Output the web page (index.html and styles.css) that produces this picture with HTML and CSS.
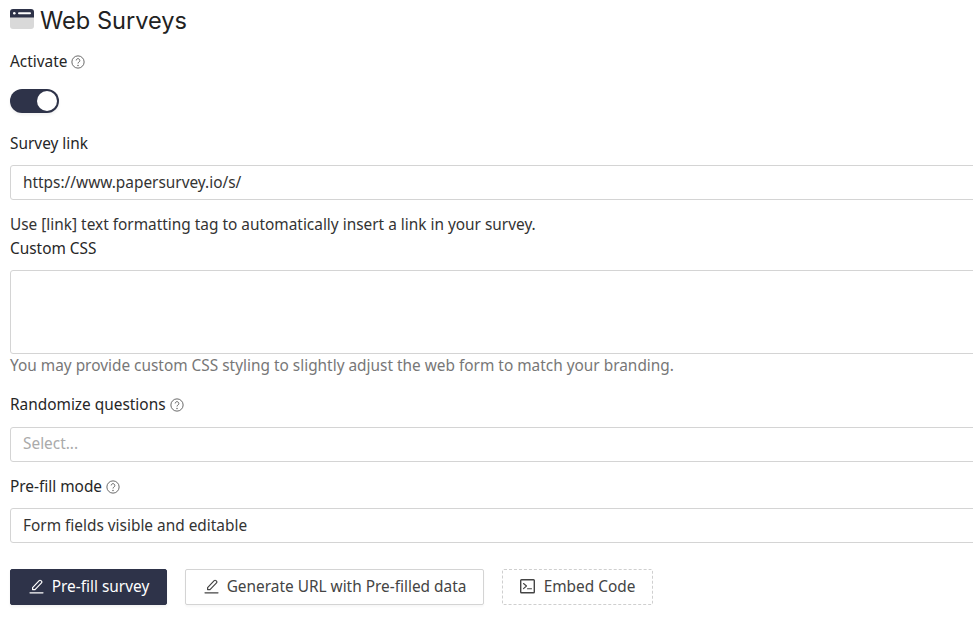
FILE: index.html
```html
<!DOCTYPE html>
<html lang="en">
<head>
<meta charset="utf-8">
<title>Web Surveys</title>
<link rel="stylesheet" href="styles.css">
</head>
<body>
<main class="page">
  <h1 class="title">
    <svg class="title-icon" viewBox="0 0 24 20" width="24" height="20" aria-hidden="true">
      <path fill="#d9d9d9" d="M0 6h24v11a3 3 0 0 1-3 3H3a3 3 0 0 1-3-3z"/>
      <path fill="#2e3349" d="M3 0h18a3 3 0 0 1 3 3v5.500H0V3a3 3 0 0 1 3-3z"/>
      <circle cx="4.300" cy="4.300" r="1.300" fill="#fff"/>
      <rect x="8" y="3.300" width="13" height="2" rx="1" fill="#fff"/>
    </svg>
    Web Surveys
  </h1>

  <div class="label lbl-activate">Activate <svg class="help" viewBox="0 0 16 16" aria-hidden="true"><circle cx="8" cy="8" r="7"/><path d="M5.900 6.200a2.100 2.100 0 1 1 3.300 1.800c-.8.500-1.200.9-1.200 1.700"/><circle class="dot" cx="8" cy="12" r=".8"/></svg></div>
  <div class="toggle"><span class="knob"></span></div>

  <div class="label lbl-link">Survey link</div>
  <div class="field">https://www.papersurvey.io/s/</div>
  <p class="hint-dark">Use [link] text formatting tag to automatically insert a link in your survey.</p>

  <div class="label lbl-css">Custom CSS</div>
  <div class="field area"></div>
  <p class="hint">You may provide custom CSS styling to slightly adjust the web form to match your branding.</p>

  <div class="label lbl-rand">Randomize questions <svg class="help" viewBox="0 0 16 16" aria-hidden="true"><circle cx="8" cy="8" r="7"/><path d="M5.900 6.200a2.100 2.100 0 1 1 3.300 1.800c-.8.500-1.200.9-1.200 1.700"/><circle class="dot" cx="8" cy="12" r=".8"/></svg></div>
  <div class="field placeholder">Select...</div>

  <div class="label lbl-prefill">Pre-fill mode <svg class="help" viewBox="0 0 16 16" aria-hidden="true"><circle cx="8" cy="8" r="7"/><path d="M5.900 6.200a2.100 2.100 0 1 1 3.300 1.800c-.8.500-1.200.9-1.200 1.700"/><circle class="dot" cx="8" cy="12" r=".8"/></svg></div>
  <div class="field">Form fields visible and editable</div>

  <div class="actions">
    <button class="btn primary"><svg class="btn-icon" viewBox="0 0 16 16" aria-hidden="true"><path d="M4.600 8.600 11.200 1.600a1.200 1.200 0 0 1 1.700 0l.6.6a1.200 1.200 0 0 1 0 1.700L7 10.600H4.600zM2 13.800h13"/></svg>Pre-fill survey</button>
    <button class="btn outline"><svg class="btn-icon" viewBox="0 0 16 16" aria-hidden="true"><path d="M4.600 8.600 11.200 1.600a1.200 1.200 0 0 1 1.700 0l.6.6a1.200 1.200 0 0 1 0 1.700L7 10.600H4.600zM2 13.800h13"/></svg>Generate URL with Pre-filled data</button>
    <button class="btn dashed"><svg class="btn-icon term" viewBox="0 0 16 16" aria-hidden="true"><rect x=".7" y=".7" width="13.600" height="13" rx=".8"/><path d="m3.500 4.500 3 2.500-3 2.700M7.500 9.700h4"/></svg>Embed Code</button>
  </div>
</main>
</body>
</html>
```
FILE: styles.css
```css
* { box-sizing: border-box; }
html, body { margin: 0; height: 100%; overflow: hidden; background: #fff; }
body { font-family: "Noto Sans", "Open Sans", sans-serif; font-size: 15.4px; line-height: 20px; color: #262626; }
.page { width: 1000px; padding: 6px 0 0 10px; }
.title { display: flex; align-items: center; gap: 6px; margin: 0; height: 30px; font-family: Inter, sans-serif; font-weight: 400; font-size: 23.6px; color: #222; }
.title-icon { margin-top: -5px; }
.label { display: flex; align-items: center; gap: 4px; height: 20px; }
.help { width: 14px; height: 14px; fill: none; stroke: #555; stroke-width: 1; }
.help .dot { fill: #555; stroke: none; }
.lbl-activate { margin-top: 16px; }
.toggle { width: 49px; height: 24px; margin-top: 17px; border-radius: 12px; background: #2e3349; padding: 2px; display: flex; justify-content: flex-end; box-shadow: 0 2px 3px rgba(0,0,0,.06); }
.knob { width: 20px; height: 20px; border-radius: 50%; background: #fff; }
.lbl-link { margin-top: 21px; }
.field { height: 35px; margin-top: 11px; padding: 6px 12px; border: 1px solid #d4d4d4; border-radius: 3px; line-height: 21px; color: #333; }
.hint-dark { margin: 15px 0 0; color: #333; }
.lbl-css { margin-top: 4px; }
.area { height: 84px; }
.hint { margin: 2px 0 0; color: #777; }
.lbl-rand { margin-top: 19px; }
.placeholder { margin-top: 12px; padding-top: 5px; color: #aaa; }
.lbl-prefill { margin-top: 15px; }
.actions { display: flex; gap: 18px; margin-top: 26px; }
.btn { display: flex; align-items: center; justify-content: center; gap: 8px; height: 36px; padding: 0; border-radius: 2px; font: inherit; font-size: 15.4px; }
.btn-icon { width: 16px; height: 16px; fill: none; stroke: currentColor; stroke-width: 1.2; stroke-linejoin: round; stroke-linecap: round; }
.term { stroke-width: 1.4; }
.term path { stroke-width: 1.1; }
.primary { width: 157px; background: #2e3349; border: 1px solid #2e3349; color: #fff; box-shadow: 0 2px 3px rgba(0,0,0,.05); }
.outline { width: 299px; background: #fff; border: 1px solid #d4d4d4; color: #444; box-shadow: 0 2px 2px rgba(0,0,0,.03); }
.dashed { width: 151px; background: #fff; border: 1px dashed #cfcfcf; color: #444; }
```
